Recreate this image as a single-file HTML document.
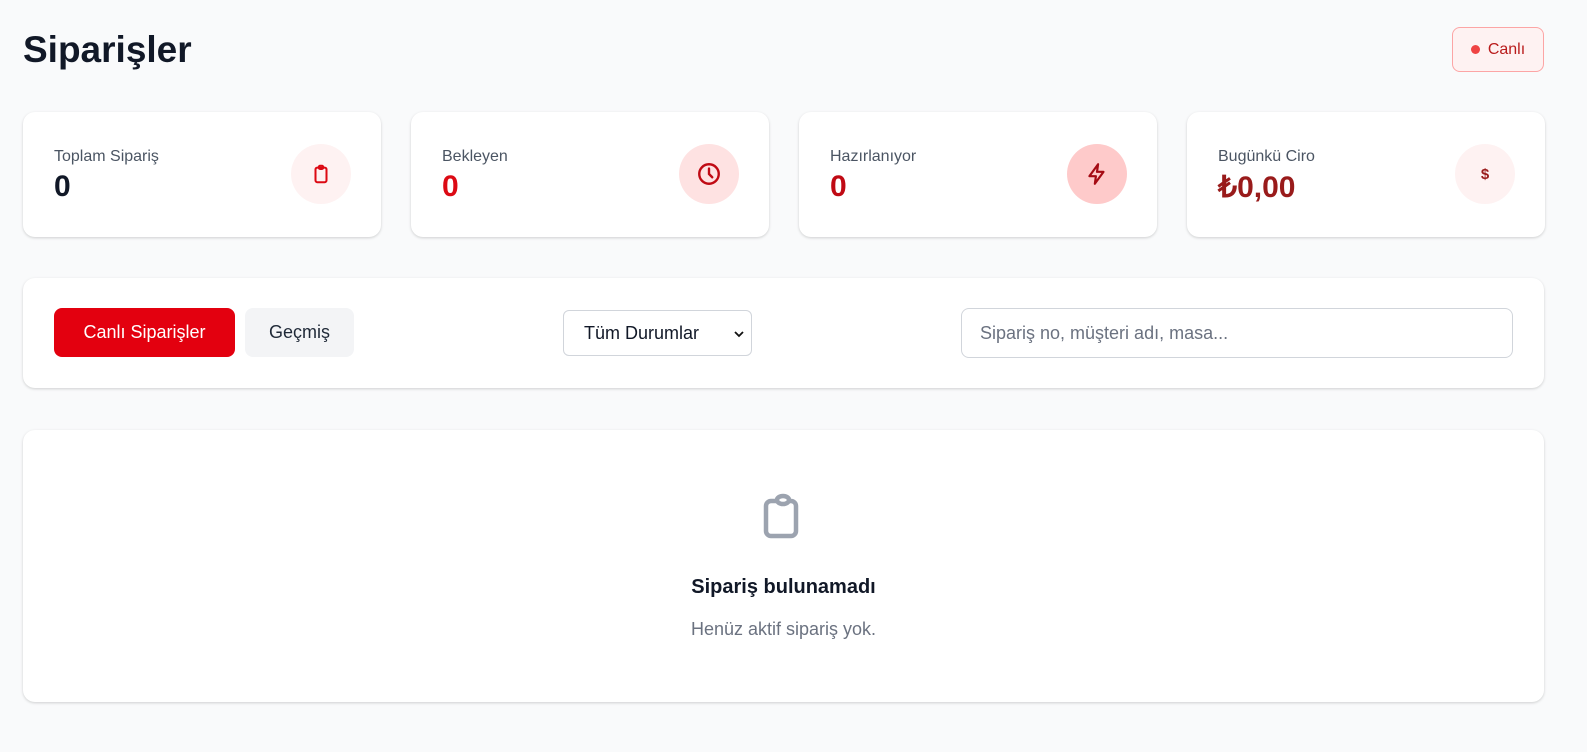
<!DOCTYPE html>
<html><head><meta charset="utf-8"><style>
*{box-sizing:border-box;margin:0;padding:0}
body{width:1587px;height:752px;background:#f9fafb;font-family:"Liberation Sans",sans-serif;color:#111827;position:relative;overflow:hidden}
.abs{position:absolute}
h1{position:absolute;left:23px;top:29px;font-size:37px;font-weight:700;color:#111827}
.badge{left:1452px;top:27px;width:92px;height:45px;border:1px solid #fca5a5;background:#fef2f2;border-radius:8px;color:#b91c1c;font-size:16px;display:flex;align-items:center;justify-content:center;gap:8px}
.badge i{width:9px;height:9px;border-radius:50%;background:#ef4444;display:block}
.card{background:#fff;border-radius:12px;box-shadow:0 1px 3px rgba(0,0,0,.12),0 1px 2px rgba(0,0,0,.06)}
.stat{top:112px;width:358px;height:125px}
.stat .l{position:absolute;left:31px;top:36px;font-size:16px;color:#4b5563}
.stat .v{position:absolute;left:31px;top:58px;font-size:30px;font-weight:700}
.stat .ic{position:absolute;right:30px;top:32px;width:60px;height:60px;border-radius:50%;display:flex;align-items:center;justify-content:center}
.btn{top:308px;height:49px;border-radius:8px;font-size:18px;display:flex;align-items:center;justify-content:center}
</style></head><body>
<h1>Siparişler</h1>
<div class="abs badge"><i></i>Canlı</div>

<div class="abs card stat" style="left:23px"><div class="l">Toplam Sipariş</div><div class="v" style="color:#111827">0</div>
<div class="ic" style="background:#fef2f2"><svg width="22" height="22" viewBox="0 0 24 24" fill="none" stroke="#dc0a14" stroke-width="2.2" stroke-linecap="round" stroke-linejoin="round"><rect x="6" y="5" width="12" height="16" rx="2"/><rect x="9.5" y="3" width="5" height="3.5" rx="1.5"/></svg></div></div>
<div class="abs card stat" style="left:411px"><div class="l">Bekleyen</div><div class="v" style="color:#dc0a14">0</div>
<div class="ic" style="background:#fee2e2"><svg width="26" height="26" viewBox="0 0 24 24" fill="none" stroke="#c00a14" stroke-width="2.2" stroke-linecap="round"><circle cx="12" cy="12" r="9"/><path d="M12 7v5l3 3"/></svg></div></div>
<div class="abs card stat" style="left:799px"><div class="l">Hazırlanıyor</div><div class="v" style="color:#c00a14">0</div>
<div class="ic" style="background:#fecaca"><svg width="26" height="26" viewBox="0 0 24 24" fill="none" stroke="#a50b14" stroke-width="2" stroke-linejoin="round"><path d="M13 3L5 14h6l-1 7 8-11h-6z"/></svg></div></div>
<div class="abs card stat" style="left:1187px"><div class="l">Bugünkü Ciro</div><div class="v" style="color:#991b1b">₺0,00</div>
<div class="ic" style="background:#fef2f2;color:#991b1b;font-weight:700;font-size:15px">$</div></div>

<div class="abs card" style="left:23px;top:278px;width:1521px;height:110px"></div>
<div class="abs btn" style="left:54px;width:181px;background:#e3000f;color:#fff">Canlı Siparişler</div>
<div class="abs btn" style="left:245px;width:109px;background:#f3f4f6;color:#1f2937">Geçmiş</div>
<div class="abs" style="left:563px;top:310px;width:189px;height:46px;border:1px solid #d1d5db;border-radius:6px;background:#fff;font-size:18px;color:#111827;display:flex;align-items:center;padding-left:20px">Tüm Durumlar<svg style="position:absolute;right:7px;top:19px" width="10" height="8" viewBox="0 0 10 8" fill="none" stroke="#111" stroke-width="1.8"><path d="M1 2l4 4 4-4"/></svg></div>
<div class="abs" style="left:961px;top:308px;width:552px;height:50px;border:1px solid #d1d5db;border-radius:8px;background:#fff;font-size:18px;color:#6b7280;display:flex;align-items:center;padding-left:18px">Sipariş no, müşteri adı, masa...</div>

<div class="abs card" style="left:23px;top:430px;width:1521px;height:272px"></div>
<svg class="abs" style="left:762px;top:492px" width="38" height="48" viewBox="0 0 38 48" fill="none" stroke="#9ca3af" stroke-width="4.5" stroke-linejoin="round"><rect x="4" y="9" width="30" height="35" rx="5"/><ellipse cx="21" cy="8" rx="6" ry="4" fill="#fff"/></svg>
<div class="abs" style="left:0;width:1567px;top:576px;text-align:center;font-size:20px;font-weight:700;color:#111827">Sipariş bulunamadı</div>
<div class="abs" style="left:0;width:1567px;top:619px;text-align:center;font-size:18px;color:#6b7280">Henüz aktif sipariş yok.</div>
</body></html>
